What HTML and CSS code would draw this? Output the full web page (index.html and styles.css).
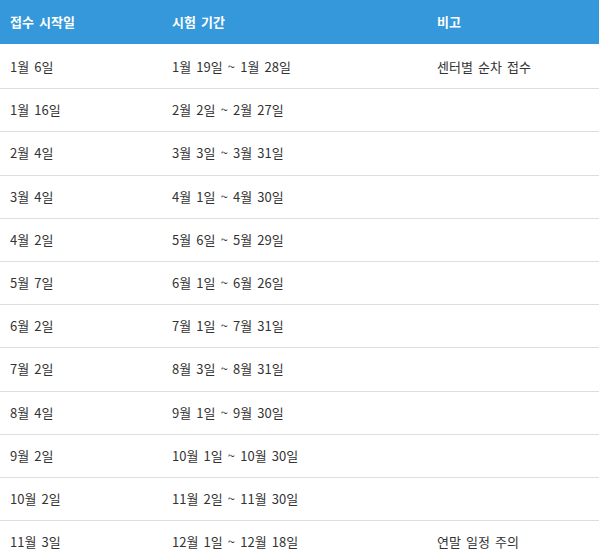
FILE: index.html
```html
<!DOCTYPE html>
<html lang="ko">
<head>
<meta charset="utf-8">
<link rel="stylesheet" href="styles.css">
</head>
<body>
<table class="schedule">
  <colgroup>
    <col class="c1"><col class="c2"><col class="c3">
  </colgroup>
  <thead>
    <tr><th>접수 시작일</th><th>시험 기간</th><th>비고</th></tr>
  </thead>
  <tbody>
    <tr><td>1월 6일</td><td>1월 19일 ~ 1월 28일</td><td>센터별 순차 접수</td></tr>
    <tr><td>1월 16일</td><td>2월 2일 ~ 2월 27일</td><td></td></tr>
    <tr><td>2월 4일</td><td>3월 3일 ~ 3월 31일</td><td></td></tr>
    <tr><td>3월 4일</td><td>4월 1일 ~ 4월 30일</td><td></td></tr>
    <tr><td>4월 2일</td><td>5월 6일 ~ 5월 29일</td><td></td></tr>
    <tr><td>5월 7일</td><td>6월 1일 ~ 6월 26일</td><td></td></tr>
    <tr><td>6월 2일</td><td>7월 1일 ~ 7월 31일</td><td></td></tr>
    <tr><td>7월 2일</td><td>8월 3일 ~ 8월 31일</td><td></td></tr>
    <tr><td>8월 4일</td><td>9월 1일 ~ 9월 30일</td><td></td></tr>
    <tr><td>9월 2일</td><td>10월 1일 ~ 10월 30일</td><td></td></tr>
    <tr><td>10월 2일</td><td>11월 2일 ~ 11월 30일</td><td></td></tr>
    <tr><td>11월 3일</td><td>12월 1일 ~ 12월 18일</td><td>연말 일정 주의</td></tr>
  </tbody>
</table>
</body>
</html>
```
FILE: styles.css
```css
html, body {
  margin: 0;
  padding: 0;
  background: #fff;
}
body {
  font-family: "Noto Sans CJK KR", "Noto Sans", sans-serif;
  font-size: 13px;
  color: #333;
}
.schedule {
  width: 599px;
  border-collapse: collapse;
  table-layout: fixed;
}
.c1 { width: 162px; }
.c2 { width: 265px; }
.c3 { width: 172px; }
.schedule th,
.schedule td {
  padding: 11px 10px 12px;
  line-height: 19.2px;
  text-align: left;
  white-space: nowrap;
  word-spacing: 1.5px;
}
.schedule th {
  padding-top: 12.4px;
  padding-bottom: 12.4px;
  background: #3498db;
  color: #fff;
  font-weight: bold;
}
.schedule td {
  border-bottom: 1px solid #ddd;
}
.schedule tbody tr:first-child td {
  padding-top: 13px;
}
```
